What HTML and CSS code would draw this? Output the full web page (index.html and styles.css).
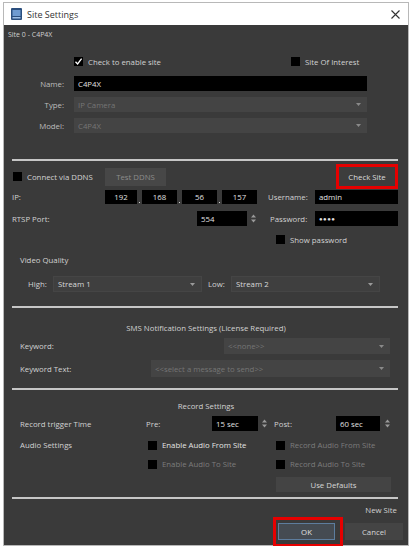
FILE: index.html
```html
<!DOCTYPE html>
<html>
<head>
<meta charset="utf-8">
<link rel="stylesheet" href="styles.css">
</head>
<body>
<div class="window">
  <div class="titlebar">
    <svg class="app-icon" width="11" height="12" viewBox="0 0 11 12">
      <rect x="0" y="0" width="11" height="12" rx="1" fill="#2b4f7e"/>
      <rect x="1.5" y="2" width="8" height="6" fill="#6f9bd0"/>
      <rect x="1.5" y="9" width="8" height="1.5" fill="#9fc0e6"/>
    </svg>
    <span class="title">Site Settings</span>
    <svg class="close" width="9" height="9" viewBox="0 0 9 9">
      <path d="M0.5 0.5 L8.5 8.5 M8.5 0.5 L0.5 8.5" stroke="#333" stroke-width="1.1"/>
    </svg>
  </div>
  <div class="content">
    <div class="row site-label">Site 0 - C4P4X</div>

    <div class="row enable-row">
      <div class="check w217"><span class="box"><svg width="9" height="9" viewBox="0 0 9 9"><path d="M1.5 4.8 L3.6 7 L7.6 1.6" stroke="#fff" stroke-width="1.3" fill="none"/></svg></span><span class="lbl">Check to enable site</span></div>
      <div class="check"><span class="box"></span><span class="lbl">Site Of Interest</span></div>
    </div>

    <div class="row field name-row">
      <span class="flabel">Name:</span>
      <div class="input black wide">C4P4X</div>
    </div>
    <div class="row field type-row">
      <span class="flabel">Type:</span>
      <div class="select disabled wide"><span>IP Camera</span><svg class="arrow" width="5" height="3" viewBox="0 0 5 3"><path d="M0 0 L5 0 L2.5 3 Z" fill="#8a8a8a"/></svg></div>
    </div>
    <div class="row field model-row">
      <span class="flabel">Model:</span>
      <div class="select disabled wide"><span>C4P4X</span><svg class="arrow" width="5" height="3" viewBox="0 0 5 3"><path d="M0 0 L5 0 L2.5 3 Z" fill="#8a8a8a"/></svg></div>
    </div>

    <div class="sep sep1"></div>

    <div class="row ddns-row">
      <div class="check w92"><span class="box"></span><span class="lbl">Connect via DDNS</span></div>
      <div class="btn test-ddns">Test DDNS</div>
      <div class="btn check-site">Check Site</div>
    </div>

    <div class="row ip-row">
      <span class="ip-label">IP:</span>
      <div class="input black num w32">192</div><span class="dot"></span>
      <div class="input black num w35">168</div><span class="dot"></span>
      <div class="input black num w35">56</div><span class="dot"></span>
      <div class="input black num w35">157</div>
      <span class="user-label">Username:</span>
      <div class="input black cred">admin</div>
    </div>

    <div class="row rtsp-row">
      <span class="rtsp-label">RTSP Port:</span>
      <div class="input black port">554</div>
      <svg class="spin" width="5" height="9" viewBox="0 0 5 9"><path d="M0 3.5 L2.5 0.5 L5 3.5 Z M0 5.5 L5 5.5 L2.5 8.5 Z" fill="#9a9a9a"/></svg>
      <span class="pass-label">Password:</span>
      <div class="input black cred dots">●●●●</div>
    </div>

    <div class="row showpw-row">
      <div class="check"><span class="box"></span><span class="lbl">Show password</span></div>
    </div>

    <div class="row vq-row">Video Quality</div>

    <div class="row hl-row">
      <span class="high-label">High:</span>
      <div class="select stream"><span>Stream 1</span><svg class="arrow" width="5" height="3" viewBox="0 0 5 3"><path d="M0 0 L5 0 L2.5 3 Z" fill="#9a9a9a"/></svg></div>
      <span class="low-label">Low:</span>
      <div class="select stream"><span>Stream 2</span><svg class="arrow" width="5" height="3" viewBox="0 0 5 3"><path d="M0 0 L5 0 L2.5 3 Z" fill="#9a9a9a"/></svg></div>
    </div>

    <div class="sep sep2"></div>

    <div class="row heading sms-title">SMS Notification Settings (License Required)</div>

    <div class="row kw-row">
      <span>Keyword:</span>
      <div class="select disabled kw"><span>&lt;&lt;none&gt;&gt;</span><svg class="arrow" width="5" height="3" viewBox="0 0 5 3"><path d="M0 0 L5 0 L2.5 3 Z" fill="#8a8a8a"/></svg></div>
    </div>
    <div class="row kwt-row">
      <span>Keyword Text:</span>
      <div class="select disabled kwt"><span>&lt;&lt;select a message to send&gt;&gt;</span><svg class="arrow" width="5" height="3" viewBox="0 0 5 3"><path d="M0 0 L5 0 L2.5 3 Z" fill="#8a8a8a"/></svg></div>
    </div>

    <div class="sep sep3"></div>

    <div class="row heading rec-title">Record Settings</div>

    <div class="row trig-row">
      <span class="trig-label">Record trigger Time</span>
      <span class="pre-label">Pre:</span>
      <div class="input black sec pre">15 sec</div>
      <svg class="spin" width="5" height="9" viewBox="0 0 5 9"><path d="M0 3.5 L2.5 0.5 L5 3.5 Z M0 5.5 L5 5.5 L2.5 8.5 Z" fill="#9a9a9a"/></svg>
      <span class="post-label">Post:</span>
      <div class="input black sec post">60 sec</div>
      <svg class="spin spin-post" width="5" height="9" viewBox="0 0 5 9"><path d="M0 3.5 L2.5 0.5 L5 3.5 Z M0 5.5 L5 5.5 L2.5 8.5 Z" fill="#9a9a9a"/></svg>
    </div>

    <div class="row audio1">
      <span class="audio-label">Audio Settings</span>
      <div class="check w128 bright"><span class="box"></span><span class="lbl">Enable Audio From Site</span></div>
      <div class="check muted"><span class="box"></span><span class="lbl">Record Audio From Site</span></div>
    </div>
    <div class="row audio2">
      <div class="check w128 muted"><span class="box"></span><span class="lbl">Enable Audio To Site</span></div>
      <div class="check muted"><span class="box"></span><span class="lbl">Record Audio To Site</span></div>
    </div>

    <div class="row defaults-row">
      <div class="btn use-defaults">Use Defaults</div>
    </div>

    <div class="sep sep4"></div>

    <div class="row newsite">New Site</div>

    <div class="row btn-row">
      <div class="btn ok">OK</div>
      <div class="btn cancel">Cancel</div>
    </div>
  </div>
</div>
</body>
</html>
```
FILE: styles.css
```css
* { box-sizing: border-box; }
html, body { margin: 0; padding: 0; background: #fff; }
body {
  font-family: "Open Sans", "Liberation Sans", sans-serif;
  font-size: 7.8px;
  color: #d2d2d2;
}
.window {
  margin: 2px 0 0 3px;
  width: 406px;
  border: 1px solid #b8b8b8;
  background: #3a3a3a;
}
.titlebar {
  height: 22px;
  background: #fff;
  display: flex;
  align-items: center;
  padding-left: 7px;
  color: #222;
}
.app-icon { display: block; }
.title { margin-left: 5px; font-size: 9px; color: #333; }
.close { margin-left: auto; margin-right: 8px; }
.content {
  height: 520px;
  background: #3a3a3a;
  display: flex;
  flex-direction: column;
}
.row { display: flex; align-items: center; white-space: nowrap; flex: none; }

.site-label { height: 18px; padding-left: 4px; color: #cfcfcf; font-size: 7px; }

.check { display: flex; align-items: center; }
.check .box {
  width: 9px; height: 9px; background: #000; display: flex;
  align-items: center; justify-content: center; flex: none;
}
.check .box svg { display: block; }
.check .lbl { margin-left: 5px; }
.w217 { width: 217px; }
.w92 { width: 92px; }
.w128 { width: 128px; }
.bright { color: #e4e4e4; }
.muted { color: #7c7c7c; }

.enable-row { margin-top: 12px; height: 13px; padding-left: 70px; }

.field { height: 15px; }
.flabel { width: 60px; text-align: right; color: #bdbdbd; }
.wide { margin-left: 10px; width: 293px; height: 15px; }
.name-row { margin-top: 8px; }
.type-row { margin-top: 6px; }
.model-row { margin-top: 6px; }

.input {
  display: flex; align-items: center; padding-left: 4px;
  color: #e0e0e0;
}
.black { background: #000; }
.select {
  display: flex; align-items: center; justify-content: space-between;
  padding: 0 6px 0 4px;
}
.select .arrow { display: block; flex: none; }
.disabled { background: #444444; color: #757575; }

.sep { height: 2px; background: #c6c6c6; margin-left: 8px; width: 386px; flex: none; }
.sep1 { margin-top: 26px; }
.sep2 { margin-top: 14px; }
.sep3 { margin-top: 11px; }
.sep4 { margin-top: 5px; }

.ddns-row { margin-top: 3px; height: 25px; padding-left: 9px; }
.btn {
  display: flex; align-items: center; justify-content: center;
  background: #474747;
}
.test-ddns { width: 61px; height: 18px; color: #8c8c8c; }
.check-site {
  margin-left: auto; margin-right: 13px; width: 56px; height: 19px;
  background: #3d3d3d; color: #dcdcdc; position: relative;
}
.check-site::after {
  content: ""; position: absolute; left: -3px; top: -3px; right: -3px; bottom: -3px;
  border: 3px solid #e60000;
}

.ip-row { margin-top: 1px; height: 14px; padding-left: 8px; }
.ip-label { width: 93px; }
.num { justify-content: center; padding-left: 0; height: 14px; }
.w32 { width: 32px; }
.w35 { width: 35px; }
.dot { width: 5px; height: 14px; display: flex; justify-content: center; align-items: flex-end; padding-bottom: 1px; }
.dot::before { content: ""; width: 1.5px; height: 1.5px; background: #cfcfcf; }
.user-label { margin-left: 11px; width: 47px; }
.cred { width: 83px; height: 14px; }

.rtsp-row { margin-top: 7px; height: 15px; padding-left: 8px; }
.rtsp-label { width: 185px; }
.port { width: 50px; height: 15px; }
.spin { display: block; margin-left: 4px; flex: none; }
.pass-label { margin-left: 14px; width: 45px; }
.dots { font-size: 6px; letter-spacing: 0.5px; height: 15px; }

.showpw-row { margin-top: 8px; height: 11px; padding-left: 272px; }
.vq-row { margin-top: 9px; height: 12px; padding-left: 16px; }

.hl-row { margin-top: 10px; height: 16px; padding-left: 24px; }
.high-label { width: 25px; }
.low-label { margin-left: 6px; width: 23px; }
.stream { width: 149px; height: 16px; background: #3f3f3f; color: #dadada; border: 1px solid #454545; }

.heading { justify-content: center; height: 12px; }
.sms-title { margin-top: 14px; }
.rec-title { margin-top: 10px; }

.kw-row, .kwt-row { padding-left: 16px; }
.kw-row { margin-top: 4px; height: 16px; }
.kwt-row { margin-top: 6px; height: 17px; }
.kw { margin-left: auto; margin-right: 18px; width: 166px; height: 16px; }
.kwt { margin-left: auto; margin-right: 18px; width: 239px; height: 17px; }

.trig-row { margin-top: 4px; height: 15px; padding-left: 16px; }
.trig-label { width: 126px; }
.pre-label { width: 66px; }
.sec { height: 15px; }
.pre { width: 46px; }
.post { width: 44px; }
.post-label { margin-left: 7px; width: 62px; }
.spin-post { margin-left: 5px; }

.audio1 { margin-top: 8px; height: 12px; padding-left: 16px; }
.audio-label { width: 128px; }
.audio2 { margin-top: 7px; height: 12px; padding-left: 144px; }

.defaults-row { margin-top: 7px; height: 15px; padding-left: 272px; }
.use-defaults { width: 115px; height: 15px; background: #444; color: #d6d6d6; }

.newsite { margin-top: 5px; height: 12px; justify-content: flex-end; padding-right: 11px; }

.btn-row { margin-top: 7px; height: 17px; justify-content: flex-end; padding-right: 5px; }
.ok {
  width: 57px; height: 17px; background: #454b52; border: 1px solid #5d7d9e;
  color: #e0e0e0; position: relative; margin-right: 10px;
}
.ok::after {
  content: ""; position: absolute; left: -6px; top: -7px; right: -9px; bottom: -8px;
  border: 3px solid #e60000;
}
.cancel { width: 58px; height: 17px; background: #444; color: #d6d6d6; }
```
